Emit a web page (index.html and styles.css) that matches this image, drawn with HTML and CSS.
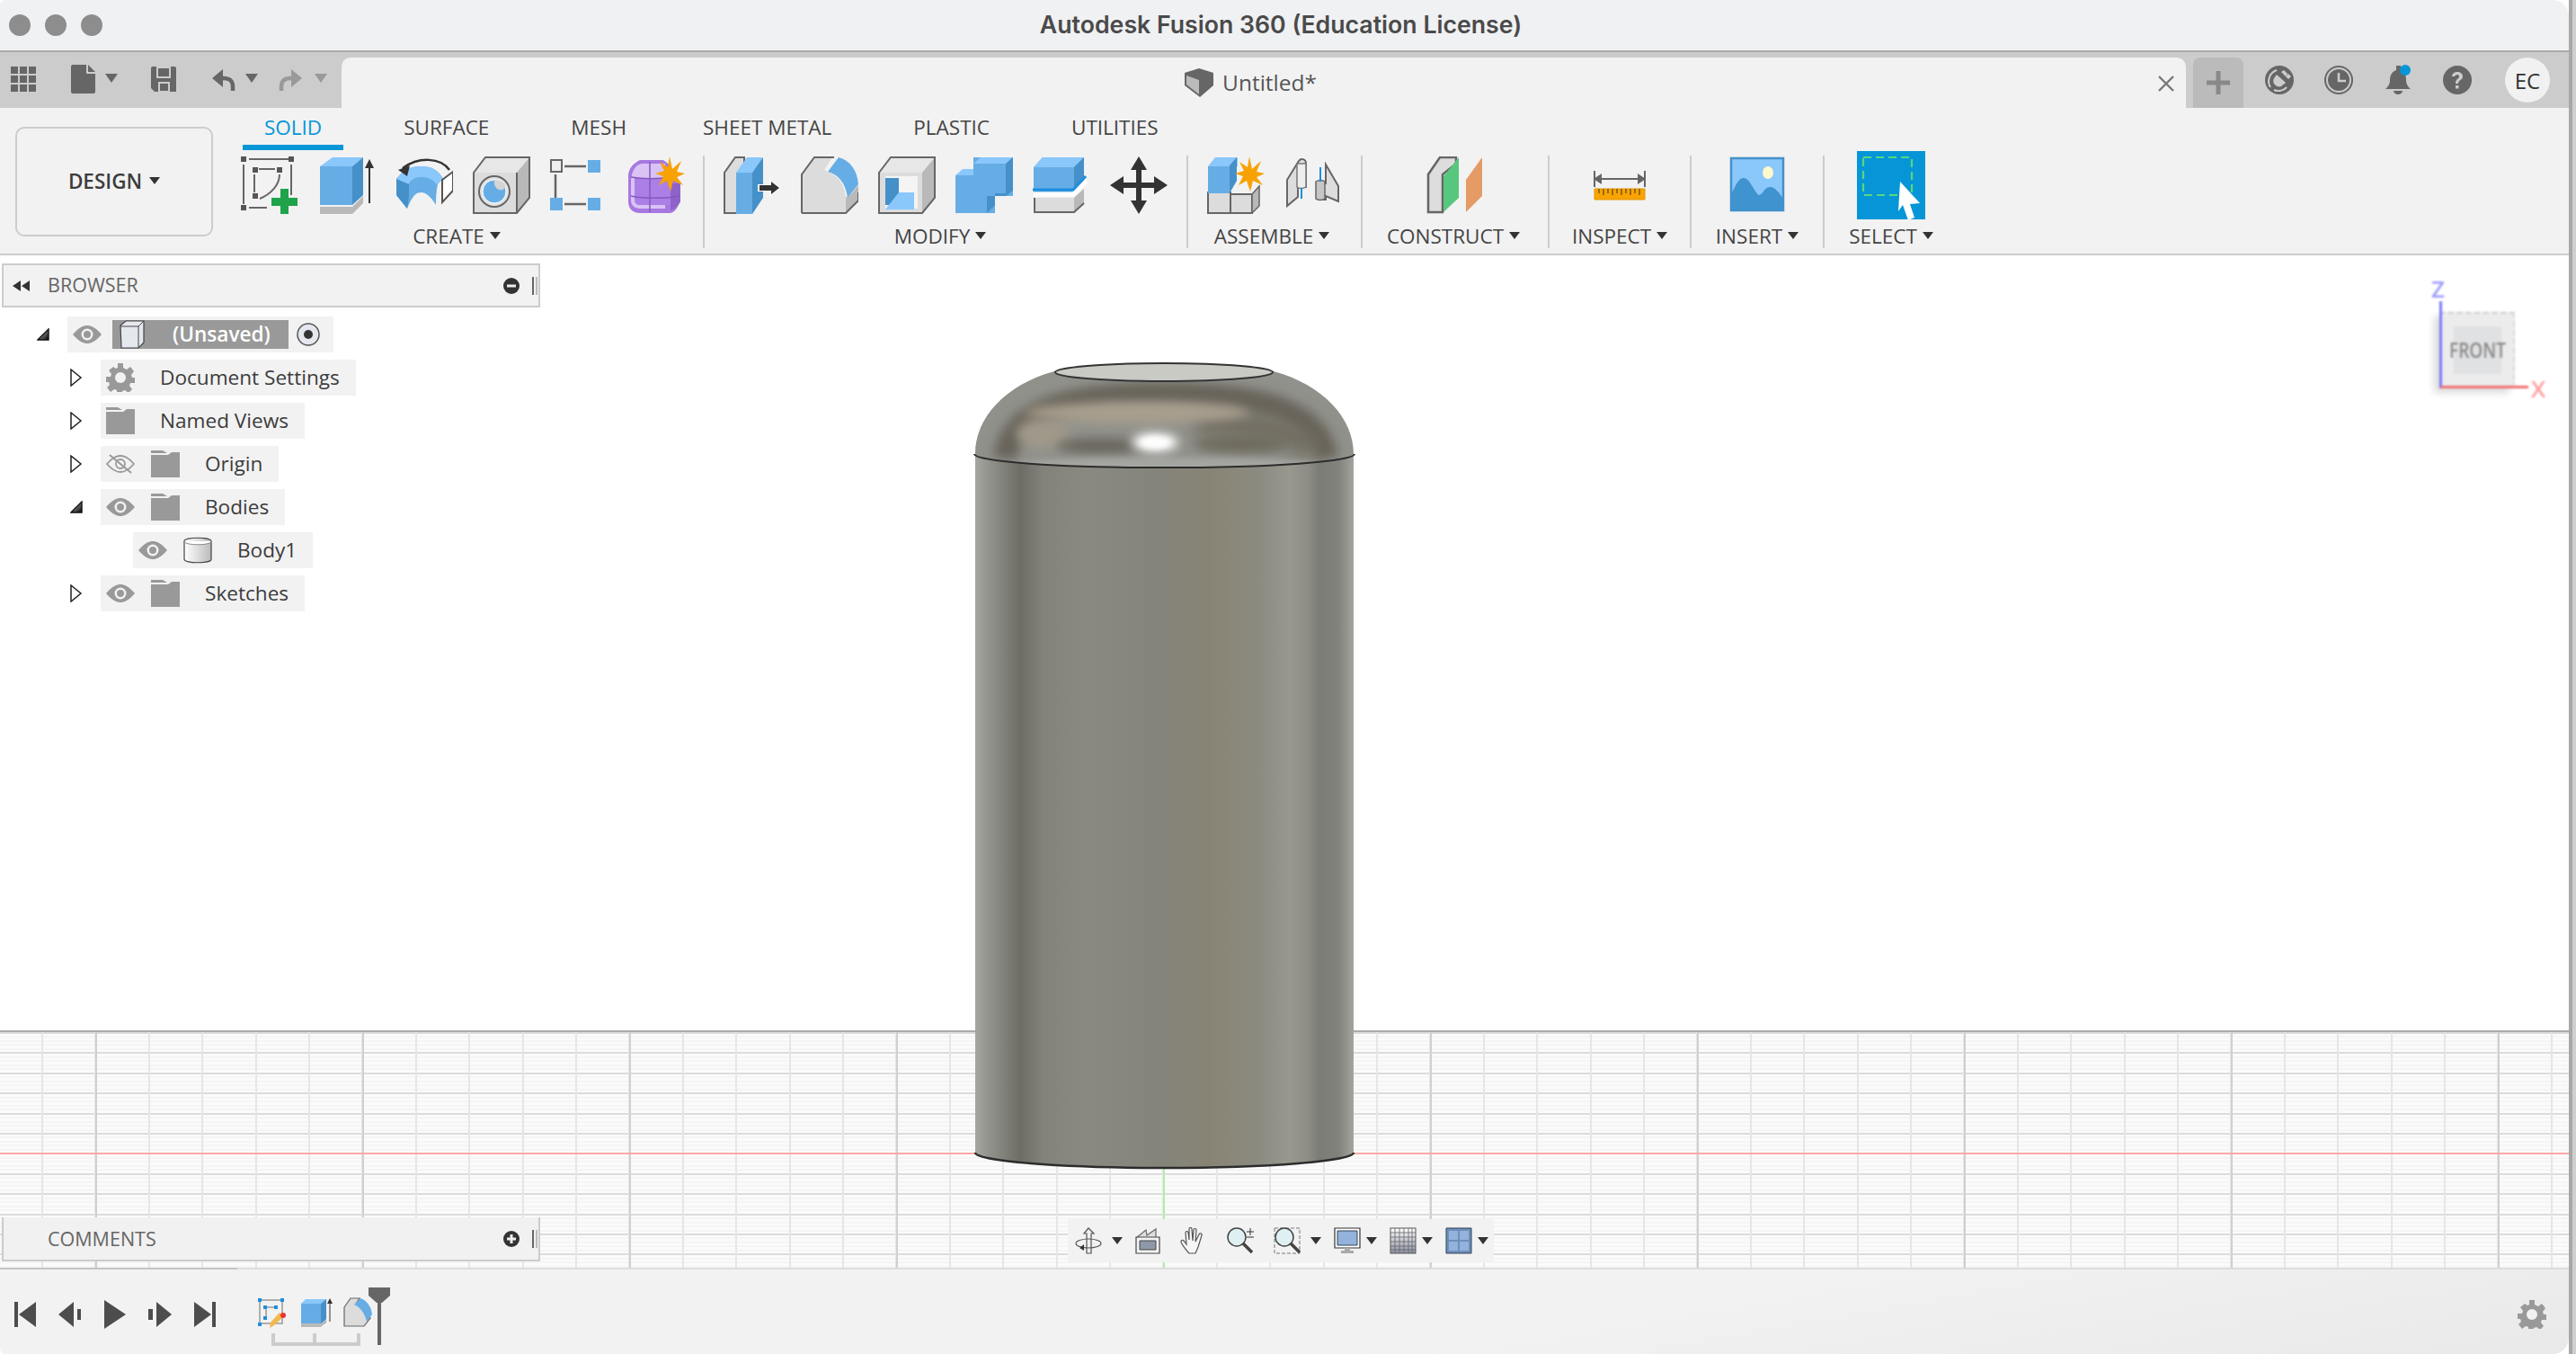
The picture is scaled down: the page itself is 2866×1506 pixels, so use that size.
FILE: index.html
```html
<!DOCTYPE html>
<html lang="en">
<head>
<meta charset="utf-8">
<title>Autodesk Fusion 360 (Education License)</title>
<link rel="stylesheet" href="styles.css">
</head>
<body>
<svg class="defs" width="0" height="0">
  <defs>
    <symbol id="eye" viewBox="0 0 32 20"><path d="M0 10C7 2 12 0 16 0s9 2 16 10c-7 8-12 10-16 10S7 18 0 10z" fill="#999"/><circle cx="16" cy="10" r="6.5" fill="#f2f2f2"/><circle cx="16" cy="10" r="4" fill="#999"/></symbol>
    <symbol id="folder" viewBox="0 0 32 30"><path d="M0 0h13l5 3H0z" fill="#999"/><path d="M0 5h19l4-3h9v28H0z" fill="#999"/></symbol>
    <symbol id="closed" viewBox="0 0 14 20"><path d="M1 1l11 9L1 19z" fill="#fff" stroke="#222" stroke-width="1.500"/></symbol>
    <symbol id="open" viewBox="0 0 14 14"><defs><linearGradient id="og" x1="0" y1="0" x2="1" y2="1"><stop offset="0" stop-color="#ddd"/><stop offset="1" stop-color="#000"/></linearGradient></defs><path d="M13 1v12H1z" fill="url(#og)" stroke="#111" stroke-width="1.400"/></symbol>
  </defs>
</svg>
<div class="window">
  <header class="titlebar">
    <div class="lights"><i class="light"></i><i class="light"></i><i class="light"></i></div>
    <div class="app-title">Autodesk Fusion 360 (Education License)</div>
  </header>

  <div class="tabbar">
    <div class="qat">
      <svg class="qat-grid" width="28" height="28" viewBox="0 0 28 28" fill="#666"><path d="M0 0h8v8H0zM10 0h8v8h-8zM20 0h8v8h-8zM0 10h8v8H0zM10 10h8v8h-8zM20 10h8v8h-8zM0 20h8v8H0zM10 20h8v8h-8zM20 20h8v8h-8z"/></svg>
      <svg class="qat-file" width="27" height="32" viewBox="0 0 27 32"><path d="M2 0h15v10h10v20a2 2 0 0 1-2 2H2a2 2 0 0 1-2-2V2a2 2 0 0 1 2-2zM19 0l8 8h-8z" fill="#666"/></svg>
      <i class="caret-lg"></i>
      <svg class="qat-save" width="28" height="28" viewBox="0 0 28 28"><path d="M2 0h24a2 2 0 0 1 2 2v26H4l-4-4V2a2 2 0 0 1 2-2z" fill="#666"/><path d="M7 1h14v11H7zM9 18h11v10H9z" fill="none" stroke="#ccc" stroke-width="2"/></svg>
      <svg class="qat-undo" width="27" height="24" viewBox="0 0 27 24"><path d="M24 24v-5c0-6-4-9-10-9h-3" fill="none" stroke="#666" stroke-width="4.500"/><path d="M13 0v20L1 10z" fill="#666"/></svg>
      <i class="caret-lg"></i>
      <svg class="qat-redo" width="27" height="24" viewBox="0 0 27 24"><path d="M3 24v-5c0-6 4-9 10-9h3" fill="none" stroke="#999" stroke-width="4.500"/><path d="M14 0v20l12-10z" fill="#999"/></svg>
      <i class="caret-lg is-off"></i>
    </div>
    <div class="doc-tab">
      <div class="doc-name">
        <svg width="32" height="32" viewBox="0 0 32 32"><path d="M0 5l16-5 16 5v14l-15 13-17-13z" fill="#666"/><path d="M2 8l14 5v16L2 18z" fill="#bbb"/></svg>
        <span>Untitled*</span>
      </div>
      <svg class="doc-close" width="18" height="18" viewBox="0 0 18 18"><path d="M1 1l16 16M17 1L1 17" stroke="#777" stroke-width="2.400"/></svg>
    </div>
    <div class="new-tab"><svg width="26" height="26" viewBox="0 0 26 26"><path d="M10.500 0h5v10.500H26v5H15.500V26h-5V15.500H0v-5h10.500z" fill="#888"/></svg></div>
    <div class="status-icons">
      <svg width="32" height="32" viewBox="0 0 32 32"><circle cx="16" cy="16" r="16" fill="#666"/><path d="M6 24A13 13 0 0 1 13 5" fill="none" stroke="#ccc" stroke-width="2"/><path d="M10 27a12 12 0 0 0 14-3" fill="none" stroke="#ccc" stroke-width="2"/><path d="M13 10l10 9-5 4c-3 1-6 0-8-3-1-2-1-4 0-6zM18 7l5 5 2-3-4-4zM23 12l3 3 3-3-3-3z" fill="#ccc"/></svg>
      <svg width="32" height="32" viewBox="0 0 32 32"><circle cx="16" cy="16" r="15" fill="none" stroke="#666" stroke-width="2"/><circle cx="16" cy="16" r="12" fill="#666"/><path d="M16 8v9h8" fill="none" stroke="#ccc" stroke-width="2.500"/></svg>
      <span class="bell">
        <svg width="28" height="32" viewBox="0 0 28 32"><path d="M12 0h5v5c5 2 6 6 6 11 0 5 2 7 5 10H0c3-3 5-5 5-10 0-5 2-9 7-11z" fill="#666"/><path d="M9 28h10a5 4 0 0 1-10 0z" fill="#666"/></svg>
        <i class="bell-dot"></i>
      </span>
      <svg width="32" height="32" viewBox="0 0 32 32"><circle cx="16" cy="16" r="16" fill="#666"/><path d="M10 12c0-3 3-5 6-5s6 2 6 5c0 4-5 4-5 8h-3c0-6 4-5 4-8 0-1-1-2-2-2s-3 1-3 2z" fill="#ccc"/><path d="M14 22h3.500v3.500H14z" fill="#ccc"/></svg>
      <div class="avatar">EC</div>
    </div>
  </div>

  <div class="toolbar">
    <div class="design-btn">DESIGN<i class="caret"></i></div>
    <div class="ribbon">
      <nav class="tabs">
        <span class="tab is-active">SOLID</span><span class="tab">SURFACE</span><span class="tab tab-tight">MESH</span><span class="tab">SHEET METAL</span><span class="tab">PLASTIC</span><span class="tab">UTILITIES</span>
      </nav>
      <div class="groups">
        <section class="group g-create">
          <div class="tools">
            <svg width="64" height="64" viewBox="0 0 64 64"><g fill="none" stroke="#666" stroke-width="2"><path d="M9 3h44M3 9v44M56 9v34M9 57h20M15 20v20M20 14h18"/><path d="M43 20c0 12-10 22-22 27" /></g><g fill="#555"><path d="M0 0h6v6H0zM53 0h6v6h-6zM0 54h6v6H0zM13 12h6v6h-6zM40 12h6v6h-6zM13 41h6v6h-6z"/></g><path d="M44 36h9v10h10v9H53v9h-9v-9H34v-9h10z" fill="#1ea34a"/></svg>
            <svg width="64" height="64" viewBox="0 0 64 64"><path d="M2 11l14-10h34L38 11z" fill="#8ac7fb"/><path d="M2 11h36v43H2z" fill="#66ade5"/><path d="M38 11L50 1v42L38 54z" fill="#4590c9"/><path d="M2 56h36l12-12v8L38 64H2z" fill="#b9b9b9"/><path d="M57 52V8" stroke="#333" stroke-width="2"/><path d="M57 3l-5 10h10z" fill="#333"/></svg>
            <svg width="64" height="64" viewBox="0 0 64 64"><path d="M1 25c9-12 18-14 28-14 10 0 18 3 24 14-2 1-6 6-6 6-2 9-2 23-2 23-6-10-12-14-16-14-7 0-10 4-16 18L1 43z" fill="#66ade5"/><path d="M1 25c9-12 18-14 28-14 10 0 18 3 24 14l-7 6c-6-7-12-8-17-8-6 0-10 1-15 8z" fill="#8ac7fb"/><path d="M1 25l14 6v14l-2 13L1 43z" fill="#4590c9"/><path d="M52 26l12-9v21l-12 13z" fill="#fff" stroke="#555" stroke-width="2"/><path d="M60 15C50 1 26 0 8 13" fill="none" stroke="#333" stroke-width="2.500"/><path d="M3 15l13-5-3 12z" fill="#333"/></svg>
            <svg width="64" height="64" viewBox="0 0 64 64"><path d="M1 18L14 1h49L49 18z" fill="#e7e7e7"/><path d="M1 18h48v45H1z" fill="#dcdcdc"/><path d="M49 18L63 1v45L49 63z" fill="#b9b9b9"/><path d="M1 18L14 1h49v45L49 63H1zM49 18v45" fill="none" stroke="#666" stroke-width="2"/><circle cx="24" cy="39" r="17" fill="#e4e4e4" stroke="#666" stroke-width="2"/><circle cx="24" cy="39" r="13" fill="#66ade5" stroke="#fff" stroke-width="1"/><path d="M24 26c4 0 9 2 12 6-1 5-3 6-7 5-4-2-6-6-5-11z" fill="#d4d4d4"/></svg>
            <svg width="64" height="64" viewBox="0 0 64 64"><path d="M16 11h24M6 20v38M16 53h24" stroke="#666" stroke-width="2.500" fill="none"/><path d="M1 4h12v13H1z" fill="#eee" stroke="#666" stroke-width="2"/><path d="M42 4h14v14H42zM0 46h14v14H0zM42 46h14v14H42z" fill="#66ade5"/></svg>
            <svg width="64" height="64" viewBox="0 0 64 64"><path d="M14 4h26l8 6 11 20v20c-3 6-6 13-12 13H14C6 63 1 58 1 50V22C1 14 6 8 14 4z" fill="#a778e0"/><path d="M4 26C5 16 9 9 16 8h26v50H14c-6 0-10-4-10-9z" fill="#d8c3f4"/><path d="M8 24h40v30H14c-4 0-6-2-6-6z" fill="#ab80e6"/><path d="M48 30l11 0v20c-2 4-6 9-11 10z" fill="#8e63c9"/><path d="M4 23c12 2 30 2 44 0M25 6v56M4 44c12 3 40 3 54 0" stroke="#8559bd" stroke-width="1.500" fill="none"/><path d="M47 0l3 14 10-9-5 12 9 2-9 4 7 9-11-5-3 12-4-12-9 5 5-10-9-3 10-3-5-10 9 6z" fill="#f7a200"/></svg>
          </div>
          <div class="group-label">CREATE<i class="caret"></i></div>
        </section>

        <section class="group g-modify">
          <div class="tools">
            <svg width="64" height="64" viewBox="0 0 64 64"><path d="M1 18L13 1h10v62H1z" fill="#ddd" stroke="#666" stroke-width="2"/><path d="M14 18L26 1h17v10L32 18z" fill="#8ac7fb"/><path d="M14 18h18v46H14z" fill="#66ade5"/><path d="M32 18L44 1v45L32 64z" fill="#4590c9"/><path d="M38 31h13v-5l12 9-12 9v-5H38z" fill="#fff"/><path d="M40 32h13v-4l9 7-9 7v-4H40z" fill="#333"/></svg>
            <svg width="64" height="64" viewBox="0 0 64 64"><path d="M1 20L15 1h20l-9 14 10 5c7 4 12 12 14 25L64 40v8L50 63H1z" fill="#dcdcdc"/><path d="M54 44l10-12v17L50 63V46z" fill="#b9b9b9"/><path d="M1 63V20L15 1h22M1 63h49l14-14V40" fill="none" stroke="#666" stroke-width="2"/><path d="M30 17L42 1c12 3 21 14 22 30l-12 15C50 30 42 20 30 17z" fill="#66ade5"/></svg>
            <svg width="64" height="64" viewBox="0 0 64 64"><path d="M1 18L14 1h49L49 18z" fill="#e7e7e7"/><path d="M1 18h48v45H1z" fill="#dcdcdc"/><path d="M49 18L63 1v45L49 63z" fill="#b9b9b9"/><path d="M1 18L14 1h49v45L49 63H1z" fill="none" stroke="#666" stroke-width="2"/><path d="M8 22h36v36H8z" fill="#f4f4f4"/><path d="M8 24h15v30H8z" fill="#4590c9"/><path d="M23 40h17v19H8z" fill="#8ac7fb"/></svg>
            <svg width="64" height="64" viewBox="0 0 64 64"><path d="M20 1h44v43H44v19H0V21h20z" fill="#66ade5"/><path d="M20 8L28 1h36l-8 7zM0 21l8-7h12v7z" fill="#8ac7fb"/><path d="M56 8l8-7v37l-8 6h-12v-3h12zM35 63l9-9V44h-9z" fill="#4590c9"/></svg>
            <svg width="64" height="64" viewBox="0 0 64 64"><path d="M1 12L11 1h46v28L46 40H1z" fill="#66ade5"/><path d="M1 12L11 1h46L46 12z" fill="#8ac7fb"/><path d="M46 12L57 1v28L46 40z" fill="#4590c9"/><path d="M1 42h44l15-15" fill="none" stroke="#fff" stroke-width="5"/><path d="M0 37h45l14-15" fill="none" stroke="#1c8fe0" stroke-width="3"/><path d="M2 46h44l11-10v16L46 62H2z" fill="#dcdcdc"/><path d="M46 46l11-10v16L46 62z" fill="#b9b9b9"/><path d="M2 46v16h44l11-10" fill="none" stroke="#666" stroke-width="2"/></svg>
            <svg width="64" height="64" viewBox="0 0 64 64"><path d="M32 0l9 15h-6v14h14v-7l15 10-15 10v-7H35v14h6l-9 15-9-15h6V35H15v7L0 32l15-10v7h14V15h-6z" fill="#333"/></svg>
          </div>
          <div class="group-label">MODIFY<i class="caret"></i></div>
        </section>

        <section class="group g-assemble">
          <div class="tools">
            <svg width="64" height="64" viewBox="0 0 64 64"><path d="M1 40h25v23H1zM26 42h24v21H26z" fill="#dcdcdc" stroke="#666" stroke-width="2"/><path d="M50 42l8-9v22l-8 8z" fill="#b9b9b9" stroke="#666" stroke-width="1.500"/><path d="M1 11L9 1h25v10z" fill="#8ac7fb"/><path d="M1 11h24v30H1z" fill="#66ade5"/><path d="M25 10L33 1v26L25 41z" fill="#4590c9"/><path d="M47 0l3 14 10-9-5 12 9 2-9 4 7 9-11-5-3 12-4-12-9 5 5-10-9-3 10-3-5-10 9 6z" fill="#f7a200"/></svg>
            <svg width="64" height="64" viewBox="0 0 64 64"><path d="M3 55V26L16 5c2-3 8-3 8 3v26h-9v11z" fill="#ddd" stroke="#666" stroke-width="2"/><path d="M14 8h10v26c-3 2-8 2-10 0z" fill="#eee" stroke="#777" stroke-width="1.500"/><path d="M60 50V33L46 9v21h-8v18h8v-4z" fill="#ddd" stroke="#666" stroke-width="2"/><path d="M35 28c3-2 8-2 10 0v19c-3 2-8 2-10 0z" fill="#c6c6c6" stroke="#666" stroke-width="1.500"/><path d="M40 12v16M19 35v12" stroke="#1c8fe0" stroke-width="2"/></svg>
          </div>
          <div class="group-label">ASSEMBLE<i class="caret"></i></div>
        </section>

        <section class="group g-construct">
          <div class="tools">
            <svg width="64" height="64" viewBox="0 0 64 64"><path d="M2 62V20L15 1h18v7L18 20v42z" fill="#ddd" stroke="#666" stroke-width="2.500"/><path d="M19 22L36 1v45L19 62z" fill="#57c77f"/><path d="M44 26L62 1v43L44 62z" fill="#e49b66"/></svg>
          </div>
          <div class="group-label">CONSTRUCT<i class="caret"></i></div>
        </section>

        <section class="group g-inspect">
          <div class="tools">
            <svg width="64" height="64" viewBox="0 0 64 64"><path d="M4 16v18M60 16v18M8 25h48" stroke="#666" stroke-width="2"/><path d="M3 25l9-6v12zM61 25l-9-6v12z" fill="#666"/><path d="M4 36h56v12H4z" fill="#f9a400" stroke="#e49500" stroke-width="1"/><path d="M9 36v5M14 36v7M19 36v5M24 36v7M29 36v5M34 36v7M39 36v5M44 36v7M49 36v5M54 36v7" stroke="#7a5a10" stroke-width="1.500"/></svg>
          </div>
          <div class="group-label">INSPECT<i class="caret"></i></div>
        </section>

        <section class="group g-insert">
          <div class="tools">
            <svg width="64" height="64" viewBox="0 0 64 64"><path d="M3 2h58v58H3z" fill="#8ac7fb" stroke="#4590c9" stroke-width="2.500"/><ellipse cx="44" cy="18" rx="6" ry="7" fill="#fdf9cc"/><path d="M3 60V43c5-12 9-19 14-19 7 0 11 15 17 19 4 0 6-9 12-9 6 0 10 6 15 13v13z" fill="#3f93cf"/></svg>
          </div>
          <div class="group-label">INSERT<i class="caret"></i></div>
        </section>

        <section class="group g-select">
          <div class="select-icon">
            <svg width="76" height="76" viewBox="0 0 76 76"><rect width="76" height="76" fill="#0696d7"/><path d="M7 7h54v42H7z" fill="none" stroke="#58d77e" stroke-width="2.200" stroke-dasharray="9 5"/><path d="M48 34l22 24-11 1 5 15-7 3-6-17-5 7z" fill="#fff"/></svg>
          </div>
          <div class="group-label">SELECT<i class="caret"></i></div>
        </section>
      </div>
    </div>
  </div>

  <main class="canvas">
    <div class="viewport"></div>
    <div class="ground"><i class="axis-red"></i><i class="axis-green"></i></div>

    <svg class="model" width="450" height="920" viewBox="1070 395 450 920">
      <defs>
        <linearGradient id="cyl" gradientUnits="userSpaceOnUse" x1="1085" y1="0" x2="1506" y2="0">
          <stop offset="0" stop-color="#a5a6a0"/><stop offset=".03" stop-color="#95968f"/><stop offset=".12" stop-color="#6d6d65"/><stop offset=".18" stop-color="#83837b"/><stop offset=".3" stop-color="#8a8981"/><stop offset=".48" stop-color="#85847b"/><stop offset=".62" stop-color="#888475"/><stop offset=".75" stop-color="#8c8b81"/><stop offset=".83" stop-color="#98988f"/><stop offset=".88" stop-color="#8d8d86"/><stop offset=".91" stop-color="#7b7c74"/><stop offset=".96" stop-color="#81827b"/><stop offset="1" stop-color="#a3a49e"/>
        </linearGradient>
        <clipPath id="domeclip"><path d="M1085 505C1085 465 1118 428 1173 413C1220 402 1370 402 1417 413C1472 428 1506 465 1506 505A210.500 15 0 0 1 1085 505z"/></clipPath>
        <filter id="b10" x="-30%" y="-150%" width="160%" height="400%"><feGaussianBlur stdDeviation="10"/></filter>
        <filter id="b6" x="-30%" y="-150%" width="160%" height="400%"><feGaussianBlur stdDeviation="6"/></filter>
        <filter id="b3" x="-50%" y="-150%" width="200%" height="400%"><feGaussianBlur stdDeviation="3"/></filter>
      </defs>
      <path d="M1085 505A210.500 15 0 0 0 1506 505V1282A210.500 17 0 0 1 1085 1282z" fill="url(#cyl)"/>
      <g clip-path="url(#domeclip)">
        <rect x="1080" y="400" width="430" height="140" fill="#90918b"/>
        <path d="M1118 510C1124 462 1175 438 1295 438C1415 438 1468 462 1476 510" fill="none" stroke="#68645a" stroke-width="26" filter="url(#b6)"/>
        <path d="M1330 470C1400 470 1450 480 1460 505" fill="none" stroke="#6f6b5f" stroke-width="28" filter="url(#b10)"/>
        <ellipse cx="1265" cy="459" rx="125" ry="12" fill="#a89f8e" filter="url(#b6)"/>
        <ellipse cx="1160" cy="482" rx="30" ry="16" fill="#a0998a" filter="url(#b6)"/>
        <ellipse cx="1225" cy="496" rx="50" ry="8" fill="#67635a" filter="url(#b6)"/>
        <ellipse cx="1380" cy="494" rx="52" ry="10" fill="#6e6a5d" filter="url(#b6)"/>
        <ellipse cx="1295" cy="517" rx="170" ry="8" fill="#a5a6a2" filter="url(#b3)"/>
        <ellipse cx="1285" cy="492" rx="26" ry="10" fill="#fff" filter="url(#b6)"/>
        <ellipse cx="1285" cy="492" rx="16" ry="6" fill="#fff" filter="url(#b3)"/>
      </g>
      <ellipse cx="1295" cy="414" rx="121" ry="10" fill="#c8cac3" stroke="#333" stroke-width="2"/>
      <path d="M1084 505A211 15 0 0 0 1507 505" fill="none" stroke="#2c2c2c" stroke-width="2"/>
      <path d="M1085 1282A210.500 17 0 0 0 1506 1282" fill="none" stroke="#2c2c2c" stroke-width="2.500"/>
    </svg>

    <div class="gizmo">
      <span class="gz-z">Z</span>
      <div class="gz-cube"><span class="gz-face"><span class="gz-text">FRONT</span></span></div>
      <span class="gz-x">X</span>
    </div>

    <aside class="browser">
      <div class="panel-head">
        <svg class="rewind" width="20" height="12" viewBox="0 0 20 12"><path d="M9 0v12L0 6zM19 0v12l-9-6z" fill="#333"/></svg>
        <span class="panel-title">BROWSER</span>
        <svg width="18" height="18" viewBox="0 0 18 18"><circle cx="9" cy="9" r="9" fill="#333"/><path d="M4 7.500h10v3H4z" fill="#eee"/></svg>
        <i class="grip"></i>
      </div>
      <ul class="tree">
        <li class="row lv0">
          <svg class="twist" width="14" height="14"><use href="#open"/></svg>
          <div class="pill pill-root">
            <svg width="32" height="20"><use href="#eye"/></svg>
            <div class="root-name">
              <svg width="28" height="32" viewBox="0 0 28 32"><path d="M1 6L7 1h20v24l-6 6H2z" fill="#e4e8ee" stroke="#444" stroke-width="1.200"/><path d="M1 7h20v24M21 7l6-6" fill="none" stroke="#444" stroke-width="1"/></svg>
              <span>(Unsaved)</span>
            </div>
            <svg class="radio" width="26" height="26" viewBox="0 0 26 26"><circle cx="13" cy="13" r="12" fill="#e4e8ee" stroke="#555" stroke-width="1.500"/><circle cx="13" cy="13" r="5" fill="#333"/></svg>
          </div>
        </li>
        <li class="row lv1">
          <svg class="twist" width="14" height="20"><use href="#closed"/></svg>
          <div class="pill wide">
            <svg width="32" height="32" viewBox="0 0 32 32"><path d="M13 0h6v5l4 2 4-3 4 5-3 4 1 3h3v6h-5l-1 3 3 4-4 4-4-3-3 1v4h-6v-5l-3-1-4 3-4-5 3-3-1-3H0v-6h5l1-3-3-4 5-4 3 2 2-1z" fill="#999"/><circle cx="16" cy="16" r="6" fill="#f2f2f2"/></svg>
            <span>Document Settings</span>
          </div>
        </li>
        <li class="row lv1">
          <svg class="twist" width="14" height="20"><use href="#closed"/></svg>
          <div class="pill wide">
            <svg width="32" height="30"><use href="#folder"/></svg>
            <span>Named Views</span>
          </div>
        </li>
        <li class="row lv1">
          <svg class="twist" width="14" height="20"><use href="#closed"/></svg>
          <div class="pill">
            <svg width="32" height="24" viewBox="0 0 32 24"><path d="M1 12C7 5 12 3 16 3s9 2 15 9c-6 7-11 9-15 9S7 19 1 12z" fill="none" stroke="#999" stroke-width="1.800"/><circle cx="16" cy="12" r="5" fill="none" stroke="#999" stroke-width="1.800"/><path d="M4 2l24 20" stroke="#999" stroke-width="2"/></svg>
            <svg width="32" height="30"><use href="#folder"/></svg>
            <span>Origin</span>
          </div>
        </li>
        <li class="row lv1">
          <svg class="twist" width="14" height="14"><use href="#open"/></svg>
          <div class="pill">
            <svg width="32" height="20"><use href="#eye"/></svg>
            <svg width="32" height="30"><use href="#folder"/></svg>
            <span>Bodies</span>
          </div>
        </li>
        <li class="row lv2">
          <div class="pill">
            <svg width="32" height="20"><use href="#eye"/></svg>
            <svg width="32" height="30" viewBox="0 0 32 30"><defs><linearGradient id="bd" x1="0" y1="0" x2="1" y2="0"><stop offset="0" stop-color="#fff"/><stop offset="1" stop-color="#bbb"/></linearGradient></defs><path d="M1 5c0-5 30-5 30 0v20c0 5-30 5-30 0z" fill="url(#bd)" stroke="#444" stroke-width="1.200"/><path d="M1 5c0 5 30 5 30 0" fill="#fff" stroke="#444" stroke-width=".6"/></svg>
            <span>Body1</span>
          </div>
        </li>
        <li class="row lv1">
          <svg class="twist" width="14" height="20"><use href="#closed"/></svg>
          <div class="pill">
            <svg width="32" height="20"><use href="#eye"/></svg>
            <svg width="32" height="30"><use href="#folder"/></svg>
            <span>Sketches</span>
          </div>
        </li>
      </ul>
    </aside>

    <aside class="comments">
      <span class="panel-title">COMMENTS</span>
      <svg width="18" height="18" viewBox="0 0 18 18"><circle cx="9" cy="9" r="9" fill="#333"/><path d="M7.500 4h3v3.500H14v3h-3.500V14h-3v-3.500H4v-3h3.500z" fill="#eee"/></svg>
      <i class="grip"></i>
    </aside>

    <div class="navbar">
      <svg class="nb-first" width="30" height="30" viewBox="0 0 30 30"><path d="M15 1l-5 6h3v22h5V7h3z" fill="#eee" stroke="#555" stroke-width="1.200"/><ellipse cx="15" cy="18" rx="14" ry="5" fill="none" stroke="#555" stroke-width="1.200"/><path d="M5 23l5-4v7z" fill="#333"/></svg>
      <i class="caret-nav"></i>
      <svg class="nb-tool" width="28" height="30" viewBox="0 0 28 30"><path d="M1 12L12 3l1 6 10-7v10" fill="#ddd" stroke="#666" stroke-width="1.200"/><path d="M1 11h26v18H1z" fill="#f2f4f6" stroke="#444" stroke-width="1.200"/><path d="M5 15h18v10H5z" fill="#8e98a8" stroke="#444"/></svg>
      <svg class="nb-tool" width="30" height="30" viewBox="0 0 30 30"><path d="M10 29c-3-3-9-11-9-13s2-2 3-1l3 4-1-13c0-2 3-2 3 0l1 8V2c0-2 3-2 3 0l1 13 1-12c0-2 3-2 3 0l-1 13 4-8c1-2 4-1 3 1l-4 13-3 7z" fill="#f6f6f6" stroke="#555" stroke-width="1.200"/></svg>
      <svg class="nb-tool" width="30" height="30" viewBox="0 0 30 30"><circle cx="11" cy="11" r="10" fill="#dff0f2" stroke="#444" stroke-width="1.500"/><path d="M18 18l10 10" stroke="#444" stroke-width="3.500"/><path d="M26 1v8M22 5h8M22 11h8" stroke="#333" stroke-width="1"/></svg>
      <svg class="nb-tool" width="30" height="30" viewBox="0 0 30 30"><path d="M1 1h28v28H1z" fill="none" stroke="#777" stroke-dasharray="4 2"/><circle cx="12" cy="11" r="10" fill="#dff0f2" stroke="#444" stroke-width="1.500"/><path d="M19 18l10 10" stroke="#444" stroke-width="3.500"/></svg>
      <i class="caret-nav"></i>
      <svg class="nb-tool" width="30" height="30" viewBox="0 0 30 30"><path d="M1 1h28v22H1z" fill="#fff" stroke="#333" stroke-width="1.200"/><path d="M4 4h22v16H4z" fill="#93b2dc" stroke="#345"/><path d="M12 23h6v3h4v3H8v-3h4z" fill="#aaa"/></svg>
      <i class="caret-nav nb-tight"></i>
      <svg class="nb-tool" width="30" height="30" viewBox="0 0 30 30"><defs><linearGradient id="gr" x1="0" y1="0" x2="0" y2="1"><stop offset="0" stop-color="#fff"/><stop offset="1" stop-color="#8b8fa3"/></linearGradient></defs><rect x="1" y="1" width="28" height="28" fill="url(#gr)" stroke="#555"/><path d="M6 1v28M11 1v28M16 1v28M21 1v28M25 1v28M1 6h28M1 11h28M1 16h28M1 21h28M1 25h28" stroke="#666" stroke-width=".8"/></svg>
      <i class="caret-nav nb-tight"></i>
      <svg class="nb-tool" width="30" height="30" viewBox="0 0 30 30"><path d="M1 1h28v28H1z" fill="#6d8fbb" stroke="#345"/><path d="M4 4h10v10H4zM16 4h10v10H16zM4 16h10v10H4zM16 16h10v10H16z" fill="#93b2dc"/></svg>
      <i class="caret-nav nb-tight"></i>
    </div>
  </main>

  <footer class="timeline">
    <div class="playback">
      <svg width="24" height="28" viewBox="0 0 24 28"><path d="M0 0h4v28H0zM24 0v28L5 14z" fill="#4d4d4d"/></svg>
      <svg width="26" height="28" viewBox="0 0 26 28"><path d="M17 0v28L0 14zM21 8h4v12h-4z" fill="#4d4d4d"/></svg>
      <svg width="24" height="32" viewBox="0 0 24 32"><path d="M0 0l24 16L0 32z" fill="#4d4d4d"/></svg>
      <svg width="26" height="28" viewBox="0 0 26 28"><path d="M9 0v28l17-14zM0 8h5v12H0z" fill="#4d4d4d"/></svg>
      <svg width="24" height="28" viewBox="0 0 24 28"><path d="M20 0h4v28h-4zM0 0v28l19-14z" fill="#4d4d4d"/></svg>
    </div>
    <svg class="ops" width="152" height="66" viewBox="284 1432 152 66">
      <path d="M304 1483v12h95v-12M350 1483v12" fill="none" stroke="#ccc" stroke-width="4"/>
      <g fill="none" stroke="#999" stroke-width="1.500"><path d="M289 1446h25v26h-25zM296 1454h12M296 1454v12"/></g>
      <path d="M287 1444h4v4h-4zM312 1444h4v4h-4zM287 1471h4v4h-4zM293 1452h4v4h-4zM305 1452h4v4h-4zM293 1464h4v4h-4z" fill="#1c8fe0"/>
      <path d="M305 1474l-5 3 1-6 10-11 5 4z" fill="#f2b84b"/><circle cx="315" cy="1463" r="3" fill="#e33"/>
      <path d="M335 1450l5-5h24l-7 5z" fill="#8ac7fb"/><path d="M335 1450h22v25h-22z" fill="#66ade5"/><path d="M357 1450l6-5v26l-6 4z" fill="#4590c9"/><path d="M335 1472h22l6-5v3l-6 6h-22z" fill="#b9b9b9"/><path d="M367 1470v-24" stroke="#333"/><path d="M367 1444l-3 6h6z" fill="#333"/>
      <path d="M383 1454l7-10h10l-4 6c8 2 14 8 16 16l-7 9h-22z" fill="#dcdcdc" stroke="#666" stroke-width="1.200"/><path d="M394 1451l7-7c6 2 12 8 13 18l-6 8c-2-9-7-16-14-19z" fill="#66ade5"/>
      <path d="M410 1432h24v9l-9 8h-6l-9-8z" fill="#666"/><path d="M420 1446h4v50h-4z" fill="#666"/>
    </svg>
    <svg class="settings" width="32" height="32" viewBox="0 0 32 32"><path d="M13 0h6v5l4 2 4-3 4 5-3 4 1 3h3v6h-5l-1 3 3 4-4 4-4-3-3 1v4h-6v-5l-3-1-4 3-4-5 3-3-1-3H0v-6h5l1-3-3-4 5-4 3 2 2-1z" fill="#999"/><circle cx="16" cy="16" r="6" fill="#f1f1f1"/></svg>
  </footer>
</div>
</body>
</html>
```
FILE: styles.css
```css
* { box-sizing: border-box; }
html, body { margin: 0; padding: 0; }
body {
  width: 2866px;
  height: 1506px;
  overflow: hidden;
  background: linear-gradient(90deg, #a8a8a8 0 4px, #cfcfcf 4px) no-repeat;
  background-position: 2858px 0;
  background-size: 8px 100%;
  background-color: #fff;
  font-family: "Open Sans", "Noto Sans", sans-serif;
  color: #444;
}
.defs { position: absolute; }
i { display: block; }
.window {
  width: 2858px;
  height: 1506px;
  display: flex;
  flex-direction: column;
  border-radius: 6px 18px 18px 6px;
  overflow: hidden;
  background: #fff;
}

/* title bar */
.titlebar {
  height: 58px;
  flex: none;
  display: flex;
  align-items: center;
  justify-content: center;
  position: relative;
  background: #f0f1f3;
  border-bottom: 2px solid #aaa;
}
.lights { position: absolute; left: 10px; top: 16px; display: flex; gap: 16px; }
.light { width: 24px; height: 24px; border-radius: 50%; background: #8d8d8d; }
.app-title {
  font-family: Inter, sans-serif;
  font-weight: 600;
  font-size: 26.7px;
  color: #4a4a4a;
  margin-left: -8px;
  margin-top: -3px;
}

/* document tabs */
.tabbar {
  height: 62px;
  flex: none;
  display: flex;
  background: #ccc;
  padding-top: 6px;
}
.qat { width: 380px; flex: none; display: flex; align-items: flex-start; padding: 10px 0 0 12px; }
.qat-file { margin-left: 39px; margin-top: -2px; }
.qat-save { margin-left: 37px; }
.qat-undo { margin-left: 39px; margin-top: 3px; }
.qat-redo { margin-left: 23px; margin-top: 3px; }
.caret-lg {
  width: 0; height: 0;
  margin: 8px 0 0 11px;
  border-left: 7.5px solid transparent;
  border-right: 7.5px solid transparent;
  border-top: 10px solid #666;
}
.caret-lg.is-off { border-top-color: #999; margin-left: 13px; }
.doc-tab {
  width: 2052px;
  flex: none;
  display: flex;
  align-items: center;
  justify-content: center;
  position: relative;
  background: #f2f2f2;
  border-radius: 10px 10px 0 0;
}
.doc-name { display: flex; align-items: center; gap: 10px; font-size: 24.5px; color: #555; margin-left: -29px; margin-top: -1px; }
.doc-close { position: absolute; right: 13px; top: 20px; }
.new-tab {
  width: 56px;
  margin-left: 8px;
  flex: none;
  display: flex;
  align-items: center;
  justify-content: center;
  background: #bbb;
  border-radius: 8px 8px 0 0;
}
.status-icons { flex: 1; display: flex; align-items: center; padding: 0 0 6px 24px; position: relative; }
.status-icons > svg, .bell { flex: none; margin-right: 34px; }
.bell { position: relative; width: 28px; height: 32px; margin-left: 2px; margin-right: 36px; }
.bell-dot { position: absolute; left: 16px; top: -1px; width: 12px; height: 12px; border-radius: 50%; background: #0696d7; }
.avatar {
  width: 50px; height: 50px;
  margin-left: 3px;
  border-radius: 50%;
  background: #f1f1f1;
  color: #333;
  font-size: 24px;
  display: flex; align-items: center; justify-content: center;
}

/* ribbon */
.toolbar {
  height: 164px;
  flex: none;
  display: flex;
  background: #f2f2f2;
  border-bottom: 2px solid #ccc;
}
.design-btn {
  width: 220px; height: 122px;
  margin: 21px 0 0 17px;
  padding-bottom: 2px;
  flex: none;
  display: flex; align-items: center; justify-content: center;
  border: 2px solid #ccc;
  border-radius: 10px;
  font-size: 22.5px;
  font-weight: 600;
  color: #3c3c3c;
}
.caret {
  width: 0; height: 0;
  margin-left: 8px;
  border-left: 6px solid transparent;
  border-right: 6px solid transparent;
  border-top: 8px solid #333;
}
.ribbon { margin-left: 19px; flex: 1; display: flex; flex-direction: column; }
.tabs { display: flex; height: 48px; padding-left: 14px; }
.tab {
  height: 47px;
  padding: 5px 24px 0;
  margin-right: 43px;
  line-height: 34px;
  font-size: 22.5px;
  color: #444;
  white-space: nowrap;
}
.tab.tab-tight { margin-right: 37px; }
.tab.is-active { color: #0696d7; border-bottom: 6px solid #0696d7; }
.groups { display: flex; margin-top: 5px; height: 103px; }
.group {
  flex: none;
  display: flex;
  flex-direction: column;
  align-items: center;
  border-right: 2px solid #ccc;
}
.tools { display: flex; gap: 22px; margin-top: 1px; height: 64px; }
.group-label {
  display: flex;
  align-items: center;
  margin-top: 10px;
  font-size: 22.5px;
  line-height: 30px;
  color: #444;
  white-space: nowrap;
}
.group-label .caret { margin-left: 6px; margin-top: -2px; }
.g-create { width: 528px; }
.g-create .tools { margin-right: 8px; }
.g-create .group-label { padding-right: 22px; }
.g-modify { width: 538px; }
.g-modify .group-label { padding-right: 12px; }
.g-assemble { width: 194px; }
.g-assemble .group-label { padding-right: 6px; }
.g-construct { width: 208px; }
.g-construct .group-label { padding-right: 4px; }
.g-inspect { width: 158px; }
.g-insert { width: 148px; }
.g-select { width: 148px; border-right: 0; }
.select-icon { height: 65px; margin-top: -5px; }
.select-icon svg { display: block; }
.g-select .group-label { margin-top: 15px; }

/* canvas */
.canvas { flex: 1; position: relative; display: flex; flex-direction: column; min-height: 0; }
.viewport { flex: 1; background: #fff; }
.ground {
  height: 266px;
  flex: none;
  position: relative;
  border-top: 2px solid #aaa;
  border-bottom: 2px solid #ddd;
  background-color: #f8f8f8;
  background-image:
    repeating-linear-gradient(90deg, transparent 0 106px, #d0d0d0 106px 108px, transparent 108px 297px),
    repeating-linear-gradient(90deg, transparent 0 46px, #e6e6e6 46px 48px, transparent 48px 59.4px),
    repeating-linear-gradient(180deg, #dcdcdc 0 2px, transparent 2px 22.4px),
    repeating-linear-gradient(180deg, #f5f5f5 0 2px, #fbfbfb 2px 4.48px);
}
.ground::after { content: ""; position: absolute; left: 0; bottom: -2px; width: 264px; height: 2px; background: #c4c4c4; }
.axis-red { position: absolute; left: 0; right: 0; top: 134px; height: 2px; background: #ffa6a6; }
.axis-green { position: absolute; left: 1294px; top: 150px; bottom: 0; width: 2px; background: #aef0a8; }
.model { position: absolute; left: 1070px; top: 111px; }

.gizmo { position: absolute; left: 2700px; top: 24px; width: 140px; height: 140px; filter: blur(.8px); }
.gz-z { position: absolute; left: 5px; top: 0; font-size: 26px; font-weight: 600; color: #9c9cff; line-height: 26px; }
.gz-x { position: absolute; left: 116px; top: 111px; font-size: 26px; font-weight: 600; color: #ffa0a0; line-height: 26px; }
.gz-cube {
  position: absolute; left: 14px; top: 39px;
  width: 84px; height: 85px;
  display: flex; align-items: center; justify-content: center;
  background: #ececec;
  border-top: 2px dashed #ccc;
  border-right: 2px dashed #d8d8d8;
  border-left: 3px solid #7a7aff;
  border-bottom: 3px solid #f07070;
  box-shadow: -6px 5px 8px rgba(0,0,0,.14);
}
.gz-cube::before { content: ""; position: absolute; left: -3px; top: -14px; width: 3px; height: 14px; background: #7a7aff; }
.gz-cube::after { content: ""; position: absolute; left: 80px; bottom: -3px; width: 16px; height: 3px; background: #f07070; }
.gz-face {
  width: 53px; height: 53px;
  display: flex; align-items: center; justify-content: center;
  background: #e0e1e3;
  color: #8a8a8a;
  font-size: 19px;
  font-weight: 600;
}
.gz-text { display: block; transform: scaleY(1.25); }

/* panels */
.browser { position: absolute; left: 2px; top: 9px; width: 599px; }
.panel-head {
  height: 49px;
  display: flex;
  align-items: center;
  background: #f2f2f2;
  border: 2px solid #ccc;
  padding-left: 10px;
}
.rewind { flex: none; }
.panel-title { font-size: 21.5px; color: #666; flex: 1; }
.panel-head .panel-title { margin-left: 19px; margin-top: -2px; }
.grip {
  width: 6px; height: 20px;
  margin: 0 1px 0 14px;
  border-left: 2px solid #666;
  border-right: 2px solid #bbb;
}
.tree { list-style: none; margin: 0; padding: 10px 0 0; }
.row { display: flex; align-items: center; height: 40px; margin-bottom: 8px; }
.lv0 { padding-left: 39px; }
.lv1 { padding-left: 76px; }
.lv2 { padding-left: 146px; }
.twist { flex: none; width: 14px; margin-right: 20px; }
.pill {
  height: 40px;
  display: flex;
  align-items: center;
  gap: 18px;
  padding: 0 18px 2px 6px;
  background: #f2f2f2;
  font-size: 22.6px;
  color: #3c3c3c;
  white-space: nowrap;
}
.pill > svg { margin-top: 2px; }
.pill > span { margin-left: 10px; }
.pill.wide { gap: 28px; }
.pill.wide > span { margin-left: 0; }
.pill-root { gap: 12px; padding-right: 15px; padding-bottom: 0; }
.pill-root > svg { margin-top: 0; }
.root-name {
  width: 196px; height: 32px;
  display: flex;
  align-items: center;
  padding-left: 8px;
  background: #999;
  color: #fff;
  font-weight: 600;
}
.root-name span { margin-left: 31px; margin-top: -2px; }
.radio { margin-left: -3px; }

.comments {
  position: absolute;
  left: 2px; top: 1070px;
  width: 599px; height: 49px;
  display: flex;
  align-items: center;
  padding-left: 49px;
  background: #f1f1f1;
  border: 2px solid #ccc;
  border-top: 0;
}

.navbar {
  position: absolute;
  left: 1188px; top: 1072px;
  width: 474px; height: 48px;
  display: flex;
  align-items: center;
  padding-left: 8px;
  background: #f2f2f2;
}
.caret-nav {
  flex: none;
  width: 0; height: 0;
  margin-left: 11px;
  border-left: 6px solid transparent;
  border-right: 6px solid transparent;
  border-top: 8px solid #333;
}
.nb-first { flex: none; }
.nb-tool { flex: none; margin-left: 22px; }
.caret-nav + .nb-tool { margin-left: 14px; }
.caret-nav.nb-tight { margin-left: 6px; }

/* timeline */
.timeline {
  height: 94px;
  flex: none;
  display: flex;
  align-items: flex-start;
  padding: 20px 25px 0 16px;
  background: linear-gradient(170deg, #f2f2f2 60%, #e9e9e9);
}
.playback { display: flex; align-items: center; gap: 25px; height: 32px; margin-top: 14px; }
.ops { margin-left: 44px; }
.settings { margin-left: auto; margin-top: 14px; }
```
